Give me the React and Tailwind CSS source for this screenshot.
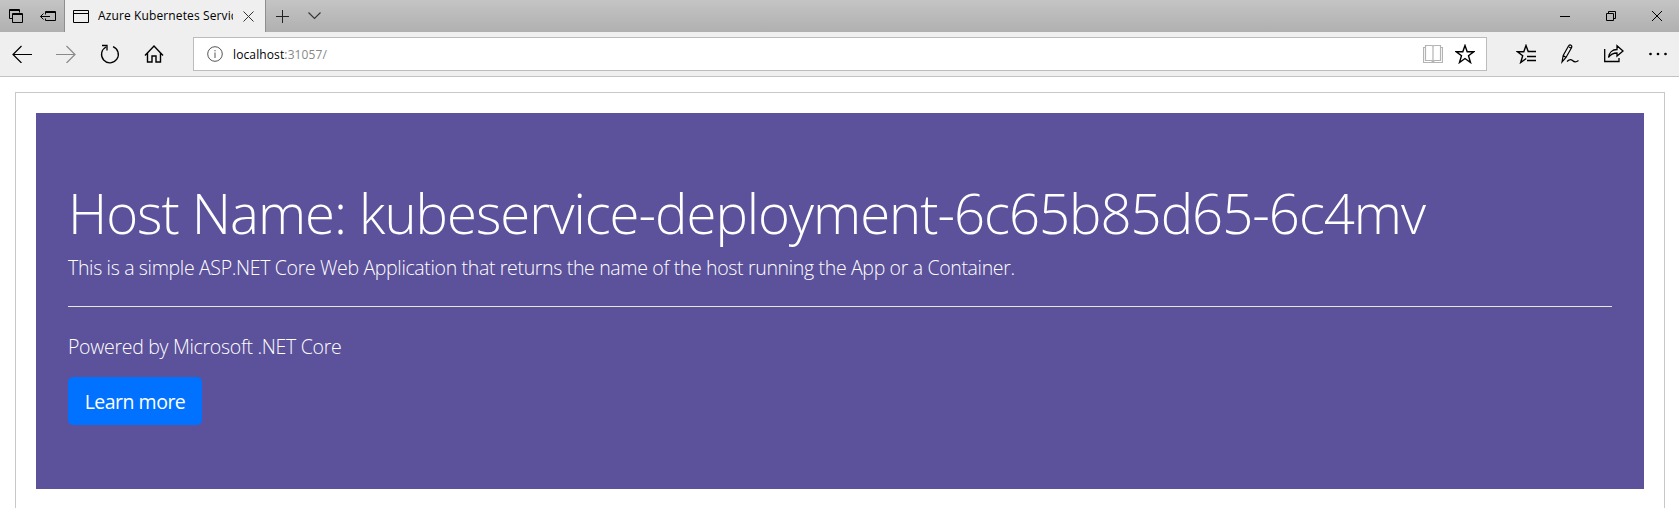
const Svg = ({ w, h, c = '#000', sw = 1, className = '', children }) => (
  <svg width={w} height={h} viewBox={`0 0 ${w} ${h}`} fill="none" stroke={c} strokeWidth={sw} className={`block shrink-0 ${className}`}>{children}</svg>
);

export default function App() {
  return (
    <div className="flex h-[508px] w-[1679px] flex-col overflow-hidden bg-white font-['Open_Sans','Noto_Sans',sans-serif] text-black">
      <div className="flex h-8 shrink-0 bg-linear-to-b from-[#c4c4c4] to-[#b0b0b0]">
        <div className="flex w-16 items-center">
          <Svg w={14} h={14} className="ml-[9px]"><path d="M3.500 9.500h-3v-9h10v3M.5 1.500h10" /><path d="M3.500 4.500h10v9h-10zM3.500 5.500h10" /></Svg>
          <Svg w={17} h={12} className="ml-[17px]"><path d="M5.500 4.500v-3h10v9h-10v-2M5.500 2.500h10M.5 6.500h9.500M3.500 3.500l-3 3 3 3" /></Svg>
        </div>
        <div className="flex w-[202px] items-center border-x border-[#8e8e8e] bg-[#efefef]">
          <Svg w={16} h={13} className="ml-2"><path d="M.5.5h15v12H.5zM.5 3.500h15" /></Svg>
          <span className="ml-[9px] w-[135px] overflow-hidden text-[12px] leading-5 tracking-[0.12px] whitespace-nowrap">Azure Kubernetes Service</span>
          <Svg w={11} h={11} c="#333" className="ml-[10px]"><path d="M.5.5l10 10M10.500.5l-10 10" /></Svg>
        </div>
        <div className="flex flex-1 items-center">
          <Svg w={13} h={13} c="#222" className="ml-[10px]"><path d="M6.500 0v13M0 6.500h13" /></Svg>
          <Svg w={13} h={8} sw={1.1} c="#333" className="ml-[19px]"><path d="M.5.5l6 6 6-6" /></Svg>
        </div>
        <div className="flex items-center">
          <Svg w={10} h={1} className="mr-9"><path d="M0 .5h10" /></Svg>
          <Svg w={10} h={10} className="mr-9"><path d="M.5 2.500h7v7h-7zM2.500 2.500v-2h7v7h-2" /></Svg>
          <Svg w={10} h={10} className="mr-[17px]"><path d="M0 0l10 10M10 0L0 10" /></Svg>
        </div>
      </div>
      <div className="flex h-[45px] shrink-0 items-center border-b border-[#c3c3c3] bg-[#efefef]">
        <Svg w={20} h={18} sw={1.2} className="ml-3"><path d="M1 9.500h19M9.500 1L1 9.500 9.500 18" /></Svg>
        <Svg w={20} h={18} sw={1.2} c="#8a8a8a" className="ml-6"><path d="M0 9.500h19M10.500 1L19 9.500 10.500 18" /></Svg>
        <Svg w={20} h={20} sw={1.3} className="ml-6"><path d="M13 2.600A8.400 8.400 0 1 1 6 3M2 1.500h5v5" /></Svg>
        <Svg w={20} h={20} sw={1.400} className="ml-6"><path d="M1 11.500L10 2l9 9.500M3.500 9v9h4.500v-6h4v6h4.500V9" /></Svg>
        <div className="ml-[29px] flex h-[34px] w-[1294px] items-center border border-[#bcbcbc] bg-white">
          <Svg w={16} h={16} c="#555" className="ml-[13px]"><circle cx="8" cy="8" r="7.300" /><path d="M8 6.500V12M8 4v1.300" /></Svg>
          <span className="ml-[10px] flex-1 pt-px text-[12px] tracking-[0.12px]">localhost<span className="text-[#888]">:31057/</span></span>
          <Svg w={20} h={19} c="#b4b4b4" sw={1.2}><path d="M2.500.5h6q1.500 0 1.500 1.500q0-1.500 1.500-1.500h6v15h-6L10 17l-1.500-1.500h-6zM10 2v14M2.500 2.500h-2v15h19v-15h-2" /></Svg>
          <Svg w={20} h={20} sw={1.400} className="mr-[11px] ml-3"><path d="M10 1.500l2.200 6.300h6.500l-5.200 4 2 6.700-5.500-4-5.500 4 2-6.700-5.200-4h6.500z" /></Svg>
        </div>
        <Svg w={20} h={20} sw={1.400} className="ml-[29px]"><path d="M20 7.500h-7.800L10 1.500 7.800 7.800H1.500l5.200 4-2 6.700 5.500-4M11 12.500h9M11 16.500h9" /></Svg>
        <Svg w={20} h={20} sw={1.200} className="ml-[25px]"><path d="M1 18l1.200-6.500L7.500 2q1.200-1.600 2.500-.8t.5 2.600L5 13.500zM2.200 11.500L5 13.500M8 3l2 1M6 17.500c2.500-2.500 4-2.500 5.500-1s3.500 2 6 0" /></Svg>
        <Svg w={20} h={20} sw={1.300} className="ml-[23px]"><path d="M.7 5V17.500H15v-3.500M4.500 13.500C5 8.500 8.500 5.500 13 5.500V1.700l6 5.300-6 5V9C9 9 6.500 10.500 4.500 13.500z" /></Svg>
        <svg width="18" height="4" className="ml-[25px] block"><circle cx="1.500" cy="2" r="1.350" /><circle cx="9" cy="2" r="1.350" /><circle cx="16.500" cy="2" r="1.350" /></svg>
      </div>
      <div className="mr-[14px] ml-[15px] mt-[15px] h-[416px] border border-b-0 border-[#c8c8c8] px-5 pt-5">
        <div className="h-[376px] bg-[#5c519b] px-8 pt-16 text-white">
          <h1 className="pt-[3px] text-[54.5px] leading-[67px] font-light tracking-[-1.02px] whitespace-nowrap"><span>Host Name: kubeservice-deployment-6c65b85d65-6c4mv</span></h1>
          <p className="mt-[6px] text-[19.5px] leading-[30px] font-light tracking-[-0.34px]"><span>This is a simple ASP.NET Core Web Application that returns the name of the host running the App or a Container.</span></p>
          <hr className="mt-[23px] border-[#e8e8da]" />
          <p className="mt-[25px] text-[19.5px] leading-[30px] font-light tracking-[-0.3px]"><span>Powered by Microsoft .NET Core</span></p>
          <button className="mt-[15px] flex h-12 w-[134px] items-center justify-center rounded-[5px] bg-[#0072ff] pt-[2px] text-[19.5px] tracking-[-0.5px] whitespace-nowrap"><span>Learn more</span></button>
        </div>
      </div>
    </div>
  );
}
